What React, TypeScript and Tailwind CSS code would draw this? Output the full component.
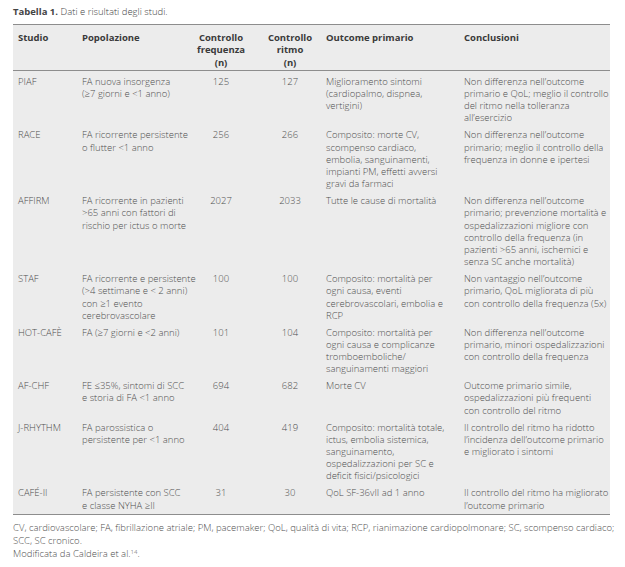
type Row = {
  studio: string;
  pop: string[];
  f: string;
  r: string;
  out: string[];
  con: string[];
};

const rows: Row[] = [
  {
    studio: "PIAF",
    pop: ["FA nuova insorgenza", "(≥7 giorni e <1 anno)"],
    f: "125",
    r: "127",
    out: ["Miglioramento sintomi", "(cardiopalmo, dispnea,", "vertigini)"],
    con: [
      "Non differenza nell’outcome",
      "primario e QoL; meglio il controllo",
      "del ritmo nella tolleranza",
      "all’esercizio",
    ],
  },
  {
    studio: "RACE",
    pop: ["FA ricorrente persistente", "o flutter <1 anno"],
    f: "256",
    r: "266",
    out: [
      "Composito: morte CV,",
      "scompenso cardiaco,",
      "embolia, sanguinamenti,",
      "impianti PM, effetti avversi",
      "gravi da farmaci",
    ],
    con: [
      "Non differenza nell’outcome",
      "primario; meglio il controllo della",
      "frequenza in donne e ipertesi",
    ],
  },
  {
    studio: "AFFIRM",
    pop: ["FA ricorrente in pazienti", ">65 anni con fattori di", "rischio per ictus o morte"],
    f: "2027",
    r: "2033",
    out: ["Tutte le cause di mortalità"],
    con: [
      "Non differenza nell’outcome",
      "primario; prevenzione mortalità e",
      "ospedalizzazioni migliore con",
      "controllo della frequenza (in",
      "pazienti >65 anni, ischemici e",
      "senza SC anche mortalità)",
    ],
  },
  {
    studio: "STAF",
    pop: ["FA ricorrente e persistente", "(>4 settimane e < 2 anni)", "con ≥1 evento", "cerebrovascolare"],
    f: "100",
    r: "100",
    out: ["Composito: mortalità per", "ogni causa, eventi", "cerebrovascolari, embolia e", "RCP"],
    con: [
      "Non vantaggio nell’outcome",
      "primario, QoL migliorata di più",
      "con controllo della frequenza (5x)",
    ],
  },
  {
    studio: "HOT-CAFÈ",
    pop: ["FA (≥7 giorni e <2 anni)"],
    f: "101",
    r: "104",
    out: ["Composito: mortalità per", "ogni causa e complicanze", "tromboemboliche/", "sanguinamenti maggiori"],
    con: [
      "Non differenza nell’outcome",
      "primario, minori ospedalizzazioni",
      "con controllo della frequenza",
    ],
  },
  {
    studio: "AF-CHF",
    pop: ["FE ≤35%, sintomi di SCC", "e storia di FA <1 anno"],
    f: "694",
    r: "682",
    out: ["Morte CV"],
    con: ["Outcome primario simile,", "ospedalizzazioni più frequenti", "con controllo del ritmo"],
  },
  {
    studio: "J-RHYTHM",
    pop: ["FA parossistica o", "persistente per <1 anno"],
    f: "404",
    r: "419",
    out: [
      "Composito: mortalità totale,",
      "ictus, embolia sistemica,",
      "sanguinamento,",
      "ospedalizzazioni per SC e",
      "deficit fisici/psicologici",
    ],
    con: [
      "Il controllo del ritmo ha ridotto",
      "l’incidenza dell’outcome primario",
      "e migliorato i sintomi",
    ],
  },
  {
    studio: "CAFÉ-II",
    pop: ["FA persistente con SCC", "e classe NYHA ≥II"],
    f: "31",
    r: "30",
    out: ["QoL SF-36vII ad 1 anno"],
    con: ["Il controllo del ritmo ha migliorato", "l’outcome primario"],
  },
];

const Lines = ({ lines }: { lines: string[] }) => (
  <>
    {lines.map((l, i) => (
      <div key={i} className="whitespace-nowrap">
        {l}
      </div>
    ))}
  </>
);

const cols = "grid grid-cols-[64px_106px_76px_62px_138px_151px]";

export default function App() {
  return (
    <div
      className="w-[625px] h-[567px] overflow-hidden bg-white text-[#4f4f4f] font-light text-[9.5px] leading-[12.2px] pl-[13px] pt-[6px]"
      style={{ fontFamily: '"Open Sans", "Liberation Sans", sans-serif' }}
    >
      <p className="text-[#444] mb-[6px]">
        <span className="font-bold">Tabella 1.</span> Dati e risultati degli studi.
      </p>

      <div className="w-[597px] bg-[#ececec] border-t-[1.5px] border-b-[1.5px] border-[#8d8d8d]">
        {/* header */}
        <div className={`${cols} font-bold text-[#3a3a3a] border-b-[1.5px] border-[#8d8d8d] pt-[7px] pb-[1px]`}>
          <div className="pl-[5px]">Studio</div>
          <div className="pl-[5px]">Popolazione</div>
          <div className="text-center">
            Controllo
            <br />
            frequenza
            <br />
            (n)
          </div>
          <div className="text-center">
            Controllo
            <br />
            ritmo
            <br />
            (n)
          </div>
          <div className="pl-[5px]">Outcome primario</div>
          <div className="pl-[5px]">Conclusioni</div>
        </div>

        {/* body */}
        {rows.map((row, i) => (
          <div key={row.studio} className={`${cols} ${i === 0 ? "pt-[5px]" : "pt-[3px]"} pb-[1.75px]`}>
            <div className="pl-[5px]">{row.studio}</div>
            <div className="pl-[5px]">
              <Lines lines={row.pop} />
            </div>
            <div className="text-center">{row.f}</div>
            <div className="text-center">{row.r}</div>
            <div className="pl-[5px]">
              <Lines lines={row.out} />
            </div>
            <div className="pl-[5px]">
              <Lines lines={row.con} />
            </div>
          </div>
        ))}
      </div>

      <div className="mt-[6px] leading-[13px]">
        <div className="whitespace-nowrap">
          CV, cardiovascolare; FA, fibrillazione atriale; PM, pacemaker; QoL, qualità di vita; RCP, rianimazione
          cardiopolmonare; SC, scompenso cardiaco;
        </div>
        <div>SCC, SC cronico.</div>
        <div>
          Modificata da Caldeira et al.<sup className="text-[6px]">14</sup>.
        </div>
      </div>
    </div>
  );
}
